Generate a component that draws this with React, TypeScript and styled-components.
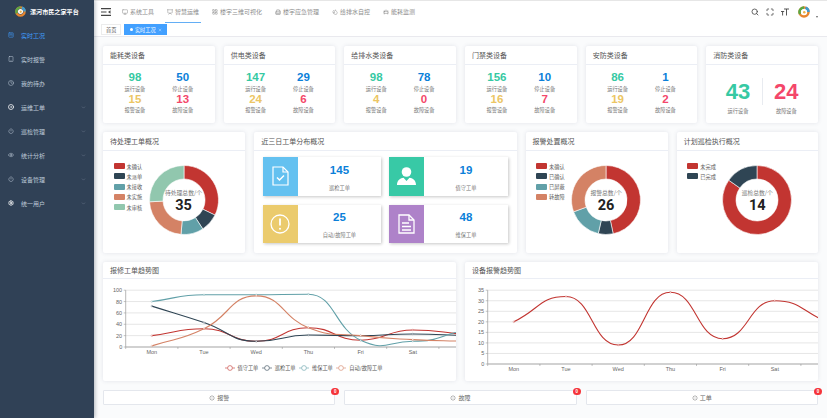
import styled, { createGlobalStyle } from "styled-components";
import {
  Building2,
  CarFront,
  ChevronDown,
  CircleDot,
  Clock,
  Droplets,
  Eye,
  LayoutGrid,
  Loader,
  Maximize,
  Monitor,
  Power,
  Presentation,
  Search,
  Settings,
  SquareKanban,
  Tablet,
  X,
} from "lucide-react";

const cjk = `"Noto Sans CJK SC", "Noto Sans", sans-serif`;
const echarts = ["#c23531", "#2f4554", "#61a0a8", "#d48265", "#91c7ae"];
const green = "#36c9a3";
const blue = "#0b7fd9";
const yellow = "#ecc664";
const red = "#f4476a";

const GlobalStyle = createGlobalStyle`
  html, body { margin: 0; padding: 0; height: 100%; }
  body { font-family: ${cjk}; background: #fafbfc; overflow: hidden; }
  #root { height: 100%; }
  * { box-sizing: border-box; }
`;

const Layout = styled.div`
  display: flex;
  height: 100vh;
`;

const Sidebar = styled.aside`
  width: 94px;
  flex-shrink: 0;
  background: #304156;
  box-shadow: 1px 0 4px rgba(0, 21, 41, 0.3);
  z-index: 2;
`;

const Brand = styled.div`
  height: 23px;
  display: flex;
  align-items: center;
  gap: 4px;
  padding-left: 15px;
  color: #fff;
  font-size: 6.1px;
  font-weight: 700;
`;

const MenuItem = styled.div<{ $active?: boolean }>`
  height: 24px;
  display: flex;
  align-items: center;
  gap: 4px;
  padding: 0 8px;
  font-size: 6px;
  color: ${(p) => (p.$active ? "#409eff" : "#bfcbd9")};
  svg { flex-shrink: 0; }
`;

const MenuText = styled.span`
  flex: 1;
  margin-left: 3px;
`;

const Main = styled.div`
  flex: 1;
  min-width: 0;
  display: flex;
  flex-direction: column;
`;

const TopBar = styled.header`
  height: 23px;
  display: flex;
  align-items: stretch;
  background: #fff;
  border-top: 1px solid #e6e6e6;
  padding: 0 9px 0 7px;
`;

const Hamburger = styled.div`
  width: 10px;
  margin-right: 9px;
  display: flex;
  align-items: center;
  color: #444;
`;

const Tabs = styled.nav`
  display: flex;
  gap: 9px;
`;

const Tab = styled.div<{ $active?: boolean }>`
  display: flex;
  align-items: center;
  gap: 2px;
  padding: 0 2px;
  font-size: 6px;
  color: #8d8d8d;
  border-bottom: 1.5px solid ${(p) => (p.$active ? "#63aef5" : "transparent")};
`;

const Tools = styled.div`
  margin-left: auto;
  display: flex;
  align-items: center;
  gap: 7px;
  color: #444;
`;

const Avatar = styled.div`
  display: flex;
  margin-left: 2px;
`;

const Caret = styled.div`
  width: 0;
  height: 0;
  margin-top: 9px;
  margin-left: -1px;
  border-left: 1.5px solid transparent;
  border-right: 1.5px solid transparent;
  border-top: 2px solid #666;
`;

const TagsBar = styled.div`
  height: 14px;
  display: flex;
  align-items: flex-start;
  gap: 3px;
  padding: 1px 0 0 7px;
  background: #fff;
  border-bottom: 1.5px solid #e9e9ee;
`;

const PageTag = styled.div<{ $active?: boolean }>`
  height: 11px;
  display: flex;
  align-items: center;
  gap: 2px;
  padding: 0 ${(p) => (p.$active ? "4.5px" : "4px")};
  font-size: 5.2px;
  color: ${(p) => (p.$active ? "#fff" : "#555")};
  background: ${(p) => (p.$active ? "#42a0ff" : "#fff")};
  border: 0.5px solid ${(p) => (p.$active ? "#42a0ff" : "#ececec")};
`;

const TagDot = styled.span`
  width: 3px;
  height: 3px;
  border-radius: 50%;
  background: #fff;
`;

const Content = styled.main`
  flex: 1;
  padding: 9px 9px 0;
  display: flex;
  flex-direction: column;
  gap: 9px;
  min-height: 0;
`;

const Row = styled.div<{ $columns: string; $height: number }>`
  display: grid;
  grid-template-columns: ${(p) => p.$columns};
  gap: 9px;
  height: ${(p) => p.$height}px;
  flex-shrink: 0;
`;

const Card = styled.section`
  min-width: 0;
  background: #fff;
  border-radius: 2px;
  box-shadow: 0 0 4px rgba(60, 70, 110, 0.13);
  overflow: hidden;
`;

const CardTitle = styled.div<{ $height?: number }>`
  height: ${(p) => p.$height ?? 18.5}px;
  padding-left: 7px;
  display: flex;
  align-items: center;
  font-size: 7px;
  color: #555;
  border-bottom: 0.5px solid #ebeef5;
`;

const StatGrid = styled.div`
  display: grid;
  grid-template-columns: 1fr 1fr;
  row-gap: 1.5px;
  padding: 7.5px 8px 0;
`;

const Stat = styled.div`
  text-align: center;
`;

const StatNumber = styled.div<{ $color: string }>`
  font: 700 11.5px/10px "Liberation Sans", sans-serif;
  color: ${(p) => p.$color};
`;

const StatLabel = styled.div`
  margin-top: 3.5px;
  font-size: 5.2px;
  line-height: 6.5px;
  color: #777;
`;

const FireGrid = styled.div`
  display: grid;
  grid-template-columns: 1fr 1px 1fr;
  padding: 13px 8px 0;
`;

const FireDivider = styled.div`
  height: 27px;
  background: #e8ebf0;
`;

const FireNumber = styled.div<{ $color: string }>`
  margin-top: 3px;
  font: 700 22px/22px "Liberation Sans", sans-serif;
  color: ${(p) => p.$color};
`;

const FireLabel = styled(StatLabel)`
  margin-top: 5px;
`;

const DonutBody = styled.div`
  display: flex;
  align-items: flex-start;
  padding: 12.5px 0 0 10.5px;
`;

const Legend = styled.ul`
  list-style: none;
  margin: 0;
  padding: 0;
  width: 35px;
  flex-shrink: 0;
  display: flex;
  flex-direction: column;
  gap: 4.3px;
`;

const LegendItem = styled.li`
  height: 6px;
  display: flex;
  align-items: center;
  gap: 2px;
  font-size: 5.2px;
  color: #555;
  white-space: nowrap;
`;

const Swatch = styled.i<{ $color: string }>`
  width: 11px;
  height: 6px;
  border-radius: 1px;
  background: ${(p) => p.$color};
`;

const DonutWrap = styled.div`
  position: relative;
  width: 70px;
  height: 70px;
  margin-top: 2px;
  svg { display: block; }
`;

const DonutCenter = styled.div`
  position: absolute;
  inset: 0;
  padding-top: 2.7px;
  display: flex;
  flex-direction: column;
  align-items: center;
  justify-content: center;
  gap: 1.3px;
  white-space: nowrap;
`;

const DonutCaption = styled.div`
  font-size: 5.8px;
  line-height: 8px;
  color: #777;
`;

const DonutTotal = styled.div`
  font: 700 14.5px/16px Roboto, sans-serif;
  color: #222;
`;

const TileGrid = styled.div`
  display: grid;
  grid-template-columns: 118px 119px;
  grid-auto-rows: 38.5px;
  column-gap: 8px;
  row-gap: 9px;
  padding: 6.5px 0 0 9px;
`;

const Tile = styled.div`
  display: flex;
  background: #fff;
  box-shadow: 1px 1px 3px rgba(0, 0, 0, 0.22);
`;

const TileIcon = styled.div<{ $color: string }>`
  width: 34.5px;
  flex-shrink: 0;
  display: flex;
  align-items: center;
  justify-content: center;
  background: ${(p) => p.$color};
`;

const TileBody = styled.div`
  flex: 1;
  text-align: center;
  padding-top: 7.5px;
`;

const TileNumber = styled.div`
  font: 700 11.5px/11px "Liberation Sans", sans-serif;
  color: ${blue};
`;

const TileLabel = styled.div`
  margin-top: 8px;
  font-size: 5.2px;
  line-height: 7px;
  color: #777;
`;

const ChartSvg = styled.svg`
  display: block;
  width: 100%;
  text { font-family: "Liberation Sans", sans-serif; font-size: 5.5px; fill: #666; }
`;

const ChartLegend = styled.div`
  display: flex;
  justify-content: center;
  gap: 3.5px;
  padding-left: 48px;
`;

const ChartLegendItem = styled.div`
  display: flex;
  align-items: center;
  gap: 3px;
  font-size: 5.2px;
  color: #555;
`;

const ActionButton = styled.div`
  position: relative;
  display: flex;
  align-items: center;
  justify-content: center;
  gap: 2px;
  background: #fff;
  border: 0.5px solid #e4e7ed;
  border-radius: 1px;
  font-size: 6px;
  color: #666;
`;

const Badge = styled.span`
  position: absolute;
  top: -3.5px;
  right: -5px;
  width: 8px;
  height: 7px;
  border-radius: 4px;
  background: #f5343a;
  color: #fff;
  font: 700 4.5px/7px "Liberation Sans", sans-serif;
  text-align: center;
`;

const Logo = ({ size }: { size: number }) => (
  <svg width={size} height={size} viewBox="0 0 24 24">
    <circle cx="12" cy="12" r="9" fill="none" stroke="#e8862e" strokeWidth="5" />
    <path d="M12 3a9 9 0 0 0-8 13" fill="none" stroke="#5aa845" strokeWidth="5" />
    <path d="M21 12a9 9 0 0 0-6-8.5" fill="none" stroke="#3d9bd0" strokeWidth="5" />
    <circle cx="12" cy="12" r="5.5" fill="#fff" />
    <circle cx="12.5" cy="12.5" r="2.5" fill="#eeb54a" />
  </svg>
);

const HamburgerIcon = () => (
  <svg width="10" height="8" viewBox="0 0 10 8" fill="none" stroke="currentColor" strokeWidth="1.1">
    <path d="M0 .6h10M0 7.4h10M0 4h5.5" />
    <path d="M9.5 2.2v3.6L7 4z" fill="currentColor" stroke="none" />
  </svg>
);

const FontSizeIcon = () => (
  <svg width="8" height="8" viewBox="0 0 8 8" fill="none" stroke="currentColor" strokeWidth="0.9">
    <path d="M3 1h5M5.5 1v6.5M0 3.5h3.2M1.6 3.5v4" />
  </svg>
);

const DocCheckIcon = () => (
  <svg width="17" height="20" viewBox="0 0 17 20" fill="none" stroke="#fff" strokeWidth="1.2">
    <path d="M1 1h10l5 5v13H1z" />
    <path d="M11 1v5h5" />
    <path d="M5 11.5l2.5 2.5 4.5-4.5" strokeWidth="1.5" />
  </svg>
);

const PersonIcon = () => (
  <svg width="19" height="18" viewBox="0 0 19 18" fill="#fff">
    <circle cx="9.5" cy="5" r="4.8" />
    <path d="M0 18c0-4 2.5-6.500 6.500-7.200L9.500 14l3-3.200C16.500 11.500 19 14 19 18z" />
  </svg>
);

const AlertIcon = () => (
  <svg width="20" height="20" viewBox="0 0 20 20" fill="none" stroke="#fff" strokeWidth="1.3">
    <circle cx="10" cy="10" r="9" />
    <path d="M10 4.500v7" strokeWidth="1.8" />
    <circle cx="10" cy="14.800" r="1" fill="#fff" stroke="none" />
  </svg>
);

const DocLinesIcon = () => (
  <svg width="17" height="20" viewBox="0 0 17 20" fill="none" stroke="#fff" strokeWidth="1.3">
    <path d="M1 1h10l5 5v13H1z" />
    <path d="M11 1v5h5" />
    <path d="M4 9h7M4 12.500h9M4 16h9" />
  </svg>
);

const arcPath = (from: number, to: number, outer: number, inner: number, c: number) => {
  const point = (deg: number, r: number) => {
    const a = ((deg - 90) * Math.PI) / 180;
    return `${c + r * Math.cos(a)} ${c + r * Math.sin(a)}`;
  };
  const large = to - from > 180 ? 1 : 0;
  return `M${point(from, outer)}A${outer} ${outer} 0 ${large} 1 ${point(to, outer)}L${point(to, inner)}A${inner} ${inner} 0 ${large} 0 ${point(from, inner)}Z`;
};

const Donut = ({ stops, caption, total }: { stops: number[]; caption: string; total: number }) => (
  <DonutWrap>
    <svg width="70" height="70" viewBox="0 0 70 70">
      {stops.map((end, i) => (
        <path
          key={i}
          d={arcPath(i === 0 ? 0 : stops[i - 1], end, 34.5, 21, 35)}
          fill={echarts[i]}
          stroke="#fff"
          strokeWidth="0.6"
        />
      ))}
    </svg>
    <DonutCenter>
      <DonutCaption>{caption}</DonutCaption>
      <DonutTotal>{total}</DonutTotal>
    </DonutCenter>
  </DonutWrap>
);

const DonutCard = ({
  title,
  legend,
  stops,
  caption,
  total,
}: {
  title: string;
  legend: string[];
  stops: number[];
  caption: string;
  total: number;
}) => (
  <Card>
    <CardTitle>{title}</CardTitle>
    <DonutBody>
      <Legend>
        {legend.map((name, i) => (
          <LegendItem key={name}>
            <Swatch $color={echarts[i]} />
            {name}
          </LegendItem>
        ))}
      </Legend>
      <Donut stops={stops} caption={caption} total={total} />
    </DonutBody>
  </Card>
);

const StatCard = ({ title, values }: { title: string; values: number[] }) => (
  <Card>
    <CardTitle>{title}</CardTitle>
    <StatGrid>
      <Stat>
        <StatNumber $color={green}>{values[0]}</StatNumber>
        <StatLabel>运行设备</StatLabel>
      </Stat>
      <Stat>
        <StatNumber $color={blue}>{values[1]}</StatNumber>
        <StatLabel>停止设备</StatLabel>
      </Stat>
      <Stat>
        <StatNumber $color={yellow}>{values[2]}</StatNumber>
        <StatLabel>报警设备</StatLabel>
      </Stat>
      <Stat>
        <StatNumber $color={red}>{values[3]}</StatNumber>
        <StatLabel>故障设备</StatLabel>
      </Stat>
    </StatGrid>
  </Card>
);

// same shape as echarts smooth lines: flat at peaks, eased in between
const smoothLine = (pts: [number, number][]) => {
  const last = pts.length - 1;
  const slope = pts.map((p, i) => {
    if (i === 0) return pts[1][1] - p[1];
    if (i === last) return p[1] - pts[last - 1][1];
    const a = pts[i - 1][1] - p[1];
    const b = pts[i + 1][1] - p[1];
    if (a * b >= 0) return 0;
    return (pts[i + 1][1] - pts[i - 1][1]) / 2;
  });
  let d = `M${pts[0][0]} ${pts[0][1]}`;
  for (let i = 1; i < pts.length; i++) {
    const [x0, y0] = pts[i - 1];
    const [x1, y1] = pts[i];
    const k = (x1 - x0) * 0.5;
    d += `C${x0 + k} ${y0 + slope[i - 1] * 0.5} ${x1 - k} ${y1 - slope[i] * 0.5} ${x1} ${y1}`;
  }
  return d;
};

const days = ["Mon", "Tue", "Wed", "Thu", "Fri", "Sat"];

const LineChart = ({
  height,
  bottom,
  max,
  step,
  series,
}: {
  height: number;
  bottom: number;
  max: number;
  step: number;
  series: number[][];
}) => {
  const left = 22.7;
  const top = 11.2;
  const band = 52.2;
  const ticks: number[] = [];
  for (let v = 0; v <= max; v += step) ticks.push(v);
  const yOf = (v: number) => bottom - (v / max) * (bottom - top);
  return (
    <ChartSvg viewBox={`0 0 353 ${height}`} height={height}>
      {ticks.map((v) => (
        <g key={v}>
          {v > 0 && <line x1={left} x2={353} y1={yOf(v)} y2={yOf(v)} stroke="#e6e6e6" strokeWidth="1" />}
          <line x1={left - 2} x2={left} y1={yOf(v)} y2={yOf(v)} stroke="#888" strokeWidth="0.5" />
          <text x={left - 3.5} y={yOf(v) + 2} textAnchor="end">
            {v}
          </text>
        </g>
      ))}
      <line x1={left} x2={left} y1={top} y2={bottom} stroke="#999" strokeWidth="0.7" />
      <line x1={left} x2={353} y1={bottom} y2={bottom} stroke="#999" strokeWidth="0.9" />
      {[0, 1, 2, 3, 4, 5, 6].map((i) => (
        <line key={i} x1={left + band * i} x2={left + band * i} y1={bottom} y2={bottom + 2} stroke="#888" strokeWidth="0.5" />
      ))}
      {days.map((day, i) => (
        <text key={day} x={left + band * (i + 0.5)} y={bottom + 7} textAnchor="middle">
          {day}
        </text>
      ))}
      {series.map((values, s) => {
        const pts = values.map((v, i): [number, number] => [left + band * (i + 0.5), yOf(v)]);
        return (
          <g key={s}>
            <path d={smoothLine(pts)} fill="none" stroke={echarts[s]} strokeWidth="1.1" />
            {pts.map(([x, y], i) => (
              <circle key={i} cx={x} cy={y} r="0.8" fill="#fff" stroke={echarts[s]} strokeWidth="0.3" />
            ))}
          </g>
        );
      })}
    </ChartSvg>
  );
};

const LegendGlyph = ({ color }: { color: string }) => (
  <svg width="10" height="6" viewBox="0 0 10 6" fill="none" stroke={color} strokeWidth="0.6">
    <path d="M0 3h2.500M7.500 3H10" />
    <circle cx="5" cy="3" r="2.400" />
  </svg>
);

const stats = [
  { title: "能耗类设备", values: [98, 50, 15, 13] },
  { title: "供电类设备", values: [147, 29, 24, 6] },
  { title: "给排水类设备", values: [98, 78, 4, 0] },
  { title: "门禁类设备", values: [156, 10, 16, 7] },
  { title: "安防类设备", values: [86, 1, 19, 2] },
];

const App = () => {
  return (
    <Layout>
      <GlobalStyle />
      <Sidebar>
        <Brand>
          <Logo size={11} />
          漯河市民之家平台
        </Brand>
        <MenuItem $active>
          <SquareKanban size={6} />
          <MenuText>实时工况</MenuText>
        </MenuItem>
        <MenuItem>
          <Tablet size={6} />
          <MenuText>实时报警</MenuText>
        </MenuItem>
        <MenuItem>
          <Clock size={6} />
          <MenuText>我的待办</MenuText>
        </MenuItem>
        <MenuItem>
          <CircleDot size={6} color="#fff" strokeWidth={3} />
          <MenuText>运维工单</MenuText>
          <ChevronDown size={5} color="#7e8b9c" />
        </MenuItem>
        <MenuItem>
          <Power size={6} />
          <MenuText>巡检管理</MenuText>
          <ChevronDown size={5} color="#7e8b9c" />
        </MenuItem>
        <MenuItem>
          <Eye size={6} />
          <MenuText>统计分析</MenuText>
          <ChevronDown size={5} color="#7e8b9c" />
        </MenuItem>
        <MenuItem>
          <Power size={6} />
          <MenuText>设备管理</MenuText>
          <ChevronDown size={5} color="#7e8b9c" />
        </MenuItem>
        <MenuItem>
          <Settings size={6} color="#fff" strokeWidth={3} />
          <MenuText>统一用户</MenuText>
          <ChevronDown size={5} color="#7e8b9c" />
        </MenuItem>
      </Sidebar>
      <Main>
        <TopBar>
          <Hamburger>
            <HamburgerIcon />
          </Hamburger>
          <Tabs>
            <Tab>
              <Monitor size={6} />
              系统工具
            </Tab>
            <Tab $active>
              <Presentation size={6} />
              智慧运维
            </Tab>
            <Tab>
              <LayoutGrid size={6} />
              楼宇三维可视化
            </Tab>
            <Tab>
              <Building2 size={6} />
              楼宇应急管理
            </Tab>
            <Tab>
              <Droplets size={6} />
              给排水自控
            </Tab>
            <Tab>
              <CarFront size={6} />
              能耗监测
            </Tab>
          </Tabs>
          <Tools>
            <Search size={8} strokeWidth={2.4} />
            <Maximize size={8} strokeWidth={2.4} />
            <FontSizeIcon />
            <Avatar>
              <Logo size={12} />
            </Avatar>
            <Caret />
          </Tools>
        </TopBar>
        <TagsBar>
          <PageTag>首页</PageTag>
          <PageTag $active>
            <TagDot />
            实时工况
            <X size={4} />
          </PageTag>
        </TagsBar>
        <Content>
          <Row $columns="repeat(6, 1fr)" $height={77}>
            {stats.map((s) => (
              <StatCard key={s.title} title={s.title} values={s.values} />
            ))}
            <Card>
              <CardTitle>消防类设备</CardTitle>
              <FireGrid>
                <Stat>
                  <FireNumber $color={green}>43</FireNumber>
                  <FireLabel>运行设备</FireLabel>
                </Stat>
                <FireDivider />
                <Stat>
                  <FireNumber $color={red}>24</FireNumber>
                  <FireLabel>故障设备</FireLabel>
                </Stat>
              </FireGrid>
            </Card>
          </Row>
          <Row $columns="142fr 262fr 142fr 141fr" $height={120.5}>
            <DonutCard
              title="待处理工单概况"
              legend={["未确认", "未派单", "未接收", "未实施", "未审核"]}
              stops={[116, 147, 185, 267, 360]}
              caption="待处理总数/个"
              total={35}
            />
            <Card>
              <CardTitle>近三日工单分布概况</CardTitle>
              <TileGrid>
                <Tile>
                  <TileIcon $color="#64c1f0">
                    <DocCheckIcon />
                  </TileIcon>
                  <TileBody>
                    <TileNumber>145</TileNumber>
                    <TileLabel>巡检工单</TileLabel>
                  </TileBody>
                </Tile>
                <Tile>
                  <TileIcon $color="#38c9a6">
                    <PersonIcon />
                  </TileIcon>
                  <TileBody>
                    <TileNumber>19</TileNumber>
                    <TileLabel>值守工单</TileLabel>
                  </TileBody>
                </Tile>
                <Tile>
                  <TileIcon $color="#ebcb6d">
                    <AlertIcon />
                  </TileIcon>
                  <TileBody>
                    <TileNumber>25</TileNumber>
                    <TileLabel>自动/故障工单</TileLabel>
                  </TileBody>
                </Tile>
                <Tile>
                  <TileIcon $color="#ae82c9">
                    <DocLinesIcon />
                  </TileIcon>
                  <TileBody>
                    <TileNumber>48</TileNumber>
                    <TileLabel>维保工单</TileLabel>
                  </TileBody>
                </Tile>
              </TileGrid>
            </Card>
            <DonutCard
              title="报警处置概况"
              legend={["未确认", "已确认", "已屏蔽", "转故障"]}
              stops={[168, 193, 250, 360]}
              caption="报警总数/个"
              total={26}
            />
            <DonutCard
              title="计划巡检执行概况"
              legend={["未完成", "已完成"]}
              stops={[305, 360]}
              caption="巡检总数/个"
              total={14}
            />
          </Row>
          <Row $columns="1fr 1fr" $height={119.5}>
            <Card>
              <CardTitle $height={17.5}>报修工单趋势图</CardTitle>
              <LineChart
                height={85}
                bottom={68}
                max={100}
                step={20}
                series={[
                  [20, 32, 10, 34, 12, 30, 22],
                  [72, 43, 10, 21, 20, 23, 20],
                  [80, 92, 92, 93, 12, 10, 30],
                  [2, 32, 90, 34, 20, 13, 10],
                ]}
              />
              <ChartLegend>
                <ChartLegendItem>
                  <LegendGlyph color={echarts[0]} />
                  值守工单
                </ChartLegendItem>
                <ChartLegendItem>
                  <LegendGlyph color={echarts[1]} />
                  巡检工单
                </ChartLegendItem>
                <ChartLegendItem>
                  <LegendGlyph color={echarts[2]} />
                  维保工单
                </ChartLegendItem>
                <ChartLegendItem>
                  <LegendGlyph color={echarts[3]} />
                  自动/故障工单
                </ChartLegendItem>
              </ChartLegend>
            </Card>
            <Card>
              <CardTitle $height={17.5}>设备报警趋势图</CardTitle>
              <LineChart
                height={100}
                bottom={85}
                max={35}
                step={5}
                series={[[20, 32, 9, 34, 12, 30, 20]]}
              />
            </Card>
          </Row>
          <Row $columns="repeat(3, 1fr)" $height={15}>
            <ActionButton>
              <Loader size={6} />
              报警
              <Badge>0</Badge>
            </ActionButton>
            <ActionButton>
              <Loader size={6} />
              故障
              <Badge>0</Badge>
            </ActionButton>
            <ActionButton>
              <Loader size={6} />
              工单
              <Badge>0</Badge>
            </ActionButton>
          </Row>
        </Content>
      </Main>
    </Layout>
  );
};

export default App;
